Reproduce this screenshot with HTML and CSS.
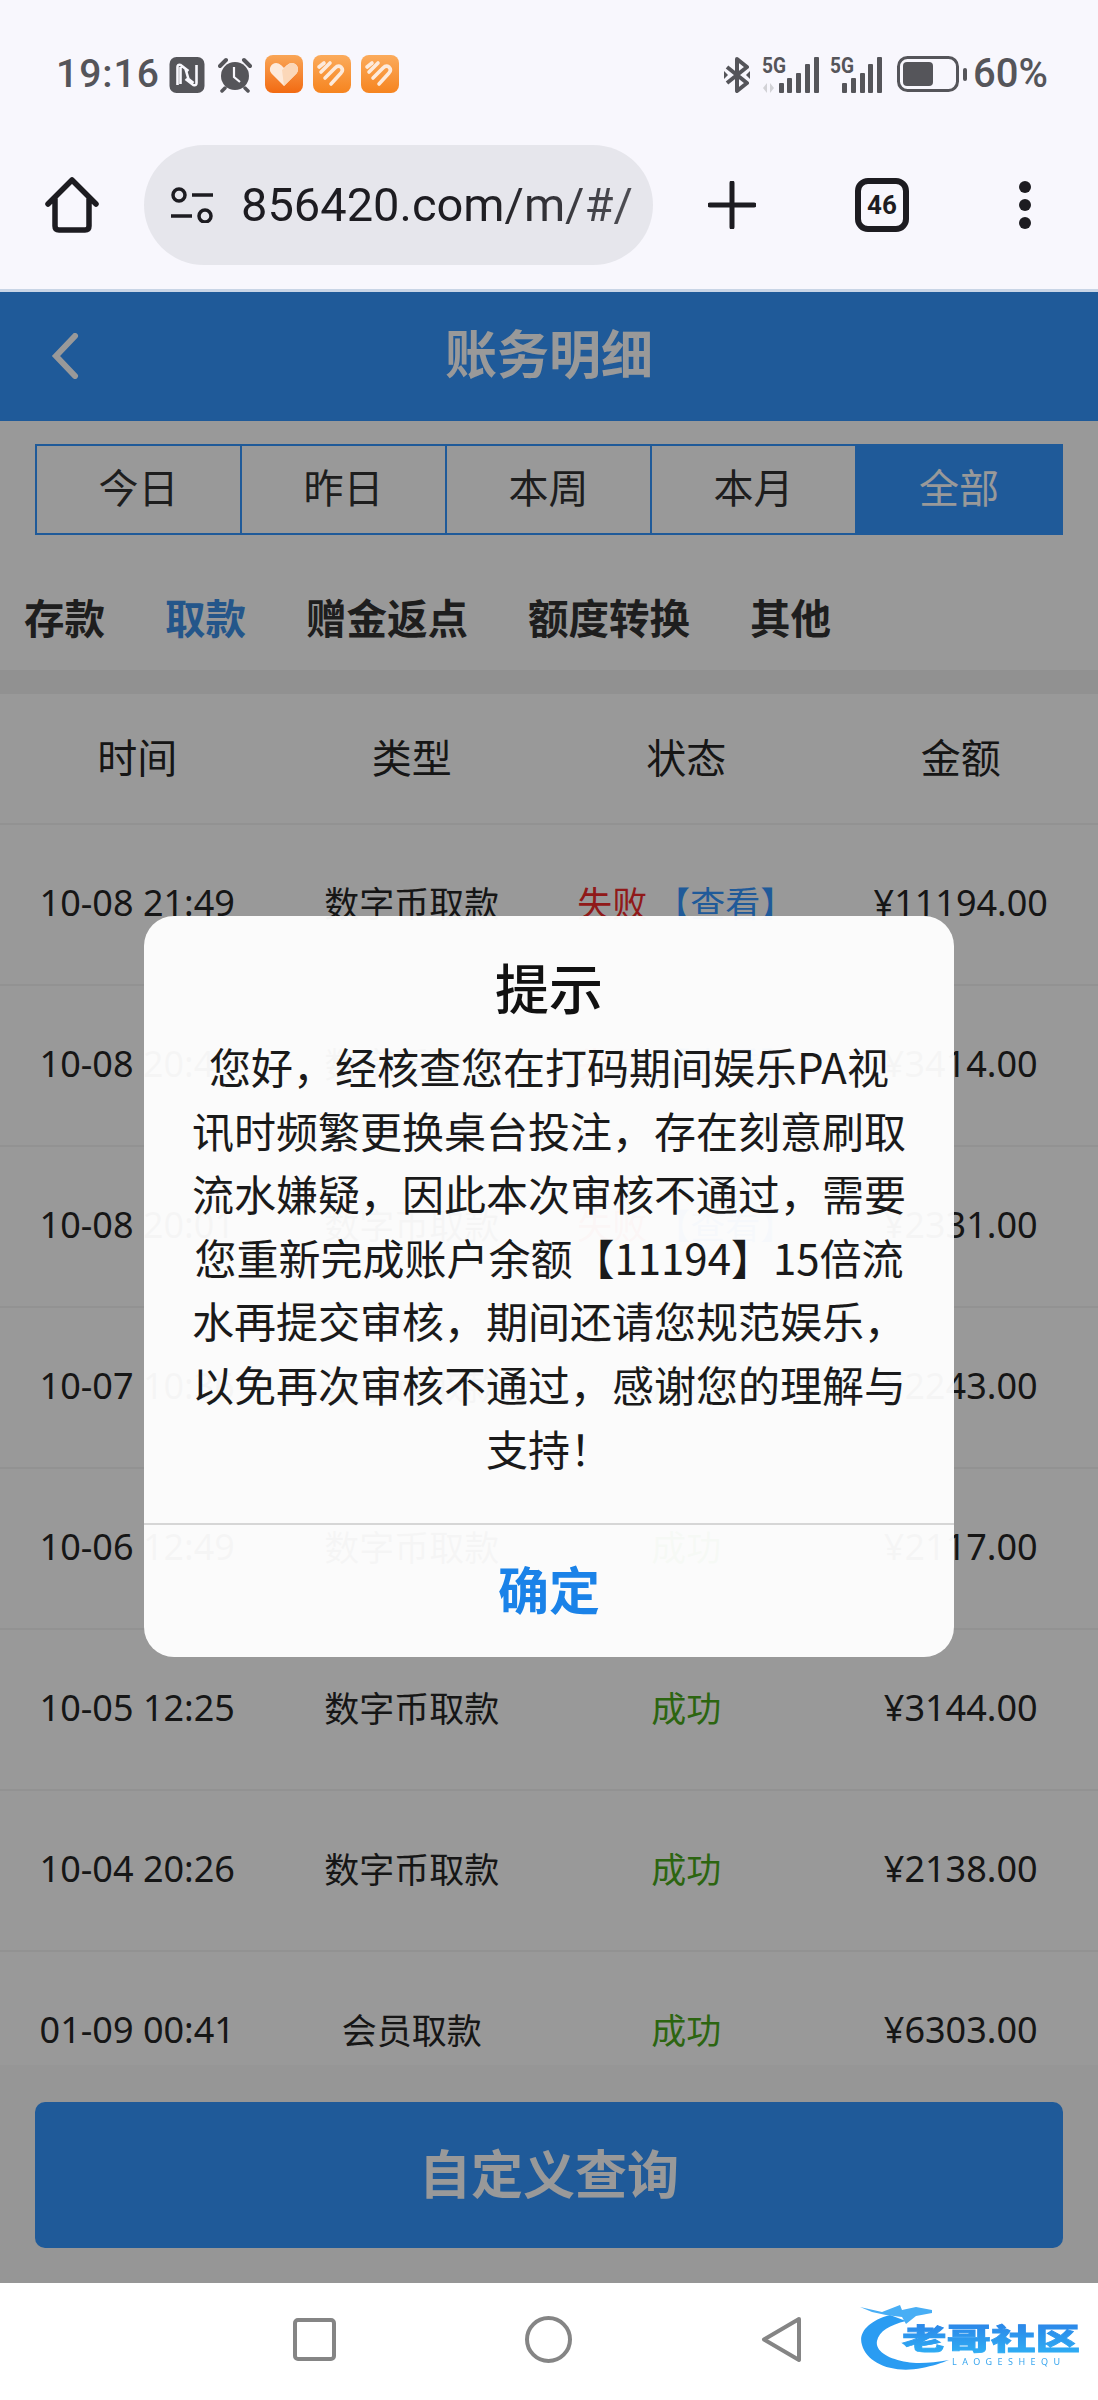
FILE: index.html
```html
<!DOCTYPE html>
<html lang="zh-CN">
<head>
<meta charset="utf-8">
<title>账务明细</title>
<link rel="stylesheet" href="styles.css">
</head>
<body>
<div class="chrome">
  <div class="status">
    <div class="status-left">
      <span class="time">19:16</span>
      <svg class="ic-nfc" viewBox="0 0 35 36"><rect width="35" height="36" rx="7" fill="#55555a"/><path d="M8 28V10q0-3 3-2l8 6M27 8v18q0 3-3 2l-8-6M11 10v17M16 12l3 10 5 4" fill="none" stroke="#f8f7fd" stroke-width="2.6"/></svg>
      <svg class="ic-alarm" viewBox="0 0 34 36"><circle cx="17" cy="19" r="14" fill="#55555a"/><path d="M2 9 8 3M32 9l-6-6" stroke="#55555a" stroke-width="4" stroke-linecap="round"/><path d="M7 31l-3 3M27 31l3 3" stroke="#55555a" stroke-width="3.5" stroke-linecap="round"/><path d="M16 10v10l6 5" fill="none" stroke="#f8f7fd" stroke-width="2.2"/></svg>
      <svg class="ic-heart" viewBox="0 0 38 38"><defs><linearGradient id="hg1" x1="0" y1="0" x2="0" y2="1"><stop offset="0" stop-color="#f9a657"/><stop offset="1" stop-color="#f26a12"/></linearGradient></defs><rect width="38" height="38" rx="8" fill="url(#hg1)"/><path d="M19 31 6.500 18.500C2 13 8 6 13.500 8.500 16 9.500 19 13 19 13s3-3.500 5.500-4.500C30 6 36 13 31.500 18.500z" fill="#fdeadb"/><path d="M19 31 31.500 18.500C36 13 30 6 24.500 8.500L17 15z" fill="#fbd7b8"/></svg>
      <svg class="ic-heart" viewBox="0 0 38 38"><defs><linearGradient id="hg2" x1="0" y1="0" x2="0" y2="1"><stop offset="0" stop-color="#fbab5c"/><stop offset="1" stop-color="#f6841f"/></linearGradient></defs><rect width="38" height="38" rx="8" fill="url(#hg2)"/><path d="M8 17 17 8M12 23 22 13q3-3 6-1 3 3 0 6L18 29" fill="none" stroke="#fdeadb" stroke-width="3.600" stroke-linecap="round" stroke-linejoin="round"/><path d="M6 12 11 8" stroke="#fdeadb" stroke-width="3.600" stroke-linecap="round"/></svg>
      <svg class="ic-heart" viewBox="0 0 38 38"><rect width="38" height="38" rx="8" fill="url(#hg2)"/><path d="M8 17 17 8M12 23 22 13q3-3 6-1 3 3 0 6L18 29" fill="none" stroke="#fdeadb" stroke-width="3.600" stroke-linecap="round" stroke-linejoin="round"/><path d="M6 12 11 8" stroke="#fdeadb" stroke-width="3.600" stroke-linecap="round"/></svg>
    </div>
    <div class="status-right">
      <svg class="ic-bt" viewBox="0 0 26 36"><path d="M3 10 23 26 13 34V2l10 8L3 26" fill="none" stroke="#55555a" stroke-width="4" stroke-linejoin="round"/><path d="M0 14v8l4-4zM26 14v8l-4-4z" fill="#55555a"/></svg>
      <svg class="ic-sig1" viewBox="0 0 57 36"><text x="0" y="16" class="g5" textLength="24" lengthAdjust="spacingAndGlyphs">5G</text><path d="M5 26v10L1 31zM8 26v10l4-5z" fill="#d2d2d6"/><g fill="#55555a"><rect x="17" y="26" width="5" height="10" rx="1"/><rect x="25" y="21" width="5" height="15" rx="1"/><rect x="34" y="16" width="5" height="20" rx="1"/><rect x="43" y="7" width="5" height="29" rx="1"/><rect x="52" y="0" width="5" height="36" rx="1"/></g></svg>
      <svg class="ic-sig2" viewBox="0 0 53 36"><text x="0" y="16" class="g5" textLength="24" lengthAdjust="spacingAndGlyphs">5G</text><g fill="#55555a"><rect x="12" y="26" width="5" height="10" rx="1"/><rect x="21" y="21" width="5" height="15" rx="1"/><rect x="30" y="16" width="5" height="20" rx="1"/><rect x="38" y="7" width="5" height="29" rx="1"/><rect x="47" y="0" width="5" height="36" rx="1"/></g></svg>
      <svg class="ic-bat" viewBox="0 0 70 36"><rect x="1.500" y="1.500" width="59" height="33" rx="9" fill="none" stroke="#55555a" stroke-width="3"/><rect x="6" y="6" width="30" height="24" rx="4" fill="#55555a"/><rect x="66" y="12" width="4" height="13" rx="2" fill="#55555a"/></svg>
      <span class="pct">60%</span>
    </div>
  </div>
  <div class="toolbar">
    <svg class="ic-home" viewBox="0 0 54 56"><path d="M3 27 27 3l24 24M10 22v27q0 4 4 4h26q4 0 4-4V22" fill="none" stroke="#1d1c21" stroke-width="5.500" stroke-linecap="round" stroke-linejoin="round"/></svg>
    <div class="pill">
      <svg class="ic-tune" viewBox="0 0 44 36"><circle cx="9" cy="8" r="6" fill="none" stroke="#1d1c21" stroke-width="3.500"/><path d="M22 8h21M1 29h21" stroke="#1d1c21" stroke-width="3.500"/><circle cx="35" cy="29" r="6" fill="none" stroke="#1d1c21" stroke-width="3.500"/></svg>
      <span class="url">856420.com/m/#/</span>
    </div>
    <svg class="ic-plus" viewBox="0 0 48 48"><path d="M24 2v44M2 24h44" stroke="#1d1c21" stroke-width="5" stroke-linecap="round"/></svg>
    <span class="tabs-count">46</span>
    <span class="kebab"><i></i><i></i><i></i></span>
  </div>
</div>

<main class="app">
  <header class="hdr">
    <svg class="ic-back" viewBox="0 0 28 46"><path d="M24 3 5 23l19 20" fill="none" stroke="#fff" stroke-width="6" stroke-linecap="round"/></svg>
    <h1 class="hdr-title">账务明细</h1>
  </header>
  <div class="seg">
    <span class="seg-item">今日</span>
    <span class="seg-item">昨日</span>
    <span class="seg-item">本周</span>
    <span class="seg-item">本月</span>
    <span class="seg-item seg-on">全部</span>
  </div>
  <nav class="tabs">
    <span class="tab">存款</span>
    <span class="tab tab-on">取款</span>
    <span class="tab">赠金返点</span>
    <span class="tab">额度转换</span>
    <span class="tab">其他</span>
  </nav>
  <div class="strip"></div>
  <div class="list">
    <div class="row row-head"><span>时间</span><span>类型</span><span>状态</span><span>金额</span></div>
    <div class="row"><span class="num">10-08 21:49</span><span>数字币取款</span><span><b class="bad">失败</b> <b class="look">【查看】</b></span><span class="num">¥11194.00</span></div>
    <div class="row"><span class="num">10-08 20:41</span><span>数字币取款</span><span><b class="bad">失败</b> <b class="look">【查看】</b></span><span class="num">¥3414.00</span></div>
    <div class="row"><span class="num">10-08 20:01</span><span>数字币取款</span><span><b class="bad">失败</b> <b class="look">【查看】</b></span><span class="num">¥2331.00</span></div>
    <div class="row"><span class="num">10-07 10:36</span><span>数字币取款</span><span><b class="ok">成功</b></span><span class="num">¥2243.00</span></div>
    <div class="row"><span class="num">10-06 12:49</span><span>数字币取款</span><span><b class="ok">成功</b></span><span class="num">¥2117.00</span></div>
    <div class="row"><span class="num">10-05 12:25</span><span>数字币取款</span><span><b class="ok">成功</b></span><span class="num">¥3144.00</span></div>
    <div class="row"><span class="num">10-04 20:26</span><span>数字币取款</span><span><b class="ok">成功</b></span><span class="num">¥2138.00</span></div>
    <div class="row"><span class="num">01-09 00:41</span><span>会员取款</span><span><b class="ok">成功</b></span><span class="num">¥6303.00</span></div>
  </div>
  <div class="foot"><button class="query">自定义查询</button></div>
  <div class="mask">
    <div class="dialog">
      <div class="dlg-main">
        <h2 class="dlg-title">提示</h2>
        <p class="dlg-body">您好，经核查您在打码期间娱乐PA视讯时频繁更换桌台投注，存在刻意刷取流水嫌疑，因此本次审核不通过，需要您重新完成账户余额【11194】15倍流水再提交审核，期间还请您规范娱乐，以免再次审核不通过，感谢您的理解与支持！</p>
      </div>
      <div class="dlg-btn">确定</div>
    </div>
  </div>
</main>

<div class="navbar">
  <svg class="nav-sq" viewBox="0 0 43 43"><rect x="2" y="2" width="39" height="39" rx="3" fill="none" stroke="#858585" stroke-width="4"/></svg>
  <svg class="nav-ci" viewBox="0 0 47 47"><circle cx="23.500" cy="23.500" r="21.500" fill="none" stroke="#858585" stroke-width="4"/></svg>
  <svg class="nav-tr" viewBox="0 0 41 47"><path d="M38 3 3 23.500 38 44z" fill="none" stroke="#858585" stroke-width="4" stroke-linejoin="round"/></svg>
  <svg class="logo" viewBox="0 0 220 70">
    <defs><linearGradient id="lg" x1="0" y1="0" x2="0" y2="1"><stop offset="0" stop-color="#2b7de6"/><stop offset="1" stop-color="#2fb3f5"/></linearGradient></defs>
    <path d="M30 12C8 18-2 30 2 42c5 18 30 29 60 23 10-2 20-5 27-8-16 3-32 4-42 2C28 56 15 48 17 38 19 28 30 22 46 18z" fill="#2a9cf2"/>
    <path d="M0 4l22 5 18-7 2 5 14-3 16 3 0 3-16 3-10 8-4-7-16-2-14-3z" fill="#48aef5"/>
    <text x="42" y="47" class="logo-cn" textLength="178" lengthAdjust="spacingAndGlyphs" fill="url(#lg)" stroke="url(#lg)" stroke-width=".8">老哥社区</text>
    <text x="92" y="62" class="logo-en" textLength="108" lengthAdjust="spacing">LAOGESHEQU</text>
  </svg>
</div>
</body>
</html>
```
FILE: styles.css
```css
* { box-sizing: border-box; }
html, body { margin: 0; padding: 0; }
body {
  width: 1098px;
  height: 2400px;
  display: flex;
  flex-direction: column;
  overflow: hidden;
  background: #fff;
  font-family: "Noto Sans", "Noto Sans CJK SC", sans-serif;
}

/* browser chrome */
.chrome { height: 292px; background: #f8f7fd; border-bottom: 3px solid #c9d5e6; flex: none; }
.status { height: 145px; display: flex; justify-content: space-between; padding: 55px 50px 0 56px; }
.status-left, .status-right { display: flex; align-items: flex-start; height: 38px; }
.time { font: 500 39px/38px Roboto, sans-serif; color: #55555a; width: 113px; letter-spacing: 1px; white-space: nowrap; }
.ic-nfc { width: 36px; height: 36px; margin-top: 2px; }
.ic-alarm { width: 34px; height: 36px; margin: 2px 13px 0 13px; }
.ic-heart { width: 38px; height: 38px; margin-right: 10px; }
.ic-bt { width: 26px; height: 36px; margin-top: 2px; margin-right: 12px; }
.ic-sig1 { width: 57px; height: 36px; margin-top: 2px; margin-right: 11px; overflow: visible; }
.ic-sig2 { width: 53px; height: 36px; margin-top: 2px; margin-right: 14px; overflow: visible; }
.g5 { font: 700 22px Roboto, sans-serif; fill: #55555a; }
.ic-bat { width: 70px; height: 36px; margin-top: 1px; margin-right: 6px; }
.pct { font: 500 40px/38px Roboto, sans-serif; color: #55555a; }

.toolbar { height: 120px; position: relative; display: flex; align-items: center; }
.ic-home { width: 54px; height: 56px; margin-left: 45px; flex: none; }
.pill {
  margin-left: 45px; width: 509px; height: 120px; border-radius: 60px; background: #e6e6ec;
  display: flex; align-items: center; padding-left: 26px; flex: none;
}
.ic-tune { width: 44px; height: 36px; flex: none; }
.url {
  margin-left: 27px; font: 400 47px/60px Roboto, sans-serif; white-space: nowrap;
  background: linear-gradient(90deg, #1d1c21 60%, #4e4e54 100%);
  -webkit-background-clip: text; background-clip: text; color: transparent;
}
.ic-plus { width: 48px; height: 48px; margin-left: 55px; flex: none; }
.tabs-count {
  margin-left: 99px; width: 54px; height: 54px; border: 6px solid #1d1c21; border-radius: 13px; flex: none;
  font: 700 26px/42px Roboto, sans-serif; text-align: center; color: #1d1c21;
}
.kebab { margin-left: 110px; display: flex; flex-direction: column; gap: 6px; flex: none; }
.kebab i { width: 12px; height: 12px; border-radius: 50%; background: #1d1c21; display: block; }

/* app */
.app { position: relative; flex: 1; min-height: 0; display: flex; flex-direction: column; background: #fff; overflow: hidden; font-family: "Noto Sans CJK SC", sans-serif; }
.hdr { height: 129px; background: #3496ff; display: flex; align-items: center; justify-content: center; position: relative; flex: none; }
.ic-back { position: absolute; left: 50px; top: 41px; width: 30px; height: 46px; }
.hdr-title { margin: 0; font-size: 52px; font-weight: 700; color: #fff; line-height: 1; position: relative; top: -5px; }

.seg { margin: 23px 35px 0; display: grid; grid-template-columns: repeat(4, 205px) 1fr; height: 91px; border: 2px solid #3496ff; flex: none; }
.seg-item { display: flex; align-items: center; justify-content: center; font-size: 40px; color: #333; border-right: 2px solid #3496ff; padding-bottom: 8px; }
.seg-on { background: #3496ff; color: #fff; border-right: 0; }

.tabs { height: 135px; display: flex; align-items: center; gap: 60px; padding: 30px 24px 0; flex: none; }
.tab { font-size: 40.5px; font-weight: 700; color: #333; line-height: 1.2; }
.tab-on { color: #3c8fe6; }

.strip { height: 24px; background: #f2f2f2; flex: none; }
.list { flex: 1; min-height: 0; overflow: hidden; }
.row { display: grid; grid-template-columns: repeat(4, 1fr); height: 161px; align-items: center; text-align: center; font-size: 35px; color: #262626; border-bottom: 2px solid #f4f4f4; white-space: nowrap; padding-bottom: 6px; }
.row-head { height: 131px; font-size: 40px; }
.num { font-family: "Noto Sans", sans-serif; font-size: 36px; padding-top: 2px; }
.row b { font-weight: 400; }
.bad { color: #f02a2a; }
.look { color: #3496ff; }
.ok { color: #4aa81c; }

.foot { flex: none; height: 218px; padding: 37px 35px 0; background: #fbfbfb; }
.query { width: 100%; height: 146px; border: 0; border-radius: 10px; background: #3496ff; color: #fff; font: 700 52px "Noto Sans CJK SC", sans-serif; padding: 0 0 8px; }

/* dialog */
.mask { position: absolute; inset: 0; background: rgba(0,0,0,.4); display: flex; align-items: center; justify-content: center; }
.dialog { width: 810px; height: 741px; margin-top: -2px; background: rgba(255,255,255,.96); border-radius: 30px; display: flex; flex-direction: column; overflow: hidden; }
.dlg-main { flex: 1; padding: 37px 47px 0; border-bottom: 2px solid #d6d6d6; }
.dlg-title { margin: 0; font-size: 54px; line-height: 68px; font-weight: 500; text-align: center; color: #111; }
.dlg-body { margin: 13px 0 0; font-size: 42px; line-height: 63.6px; text-align: center; color: #1a1a1a; }
.dlg-btn { height: 132px; display: flex; align-items: center; justify-content: center; font-size: 51px; font-weight: 700; color: #1a82e8; flex: none; padding-bottom: 6px; }

/* android nav */
.navbar { height: 117px; position: relative; flex: none; background: #fff; }
.nav-sq { position: absolute; left: 293px; top: 35px; width: 43px; height: 43px; }
.nav-ci { position: absolute; left: 525px; top: 33px; width: 47px; height: 47px; }
.nav-tr { position: absolute; left: 761px; top: 33px; width: 41px; height: 47px; }
.logo { position: absolute; left: 860px; top: 20px; width: 220px; height: 70px; filter: blur(.4px); }
.logo-cn { font: 900 29px "Noto Sans CJK SC", sans-serif; }
.logo-en { font: 400 9px "Noto Sans", sans-serif; fill: #3aa6ee; }
```
